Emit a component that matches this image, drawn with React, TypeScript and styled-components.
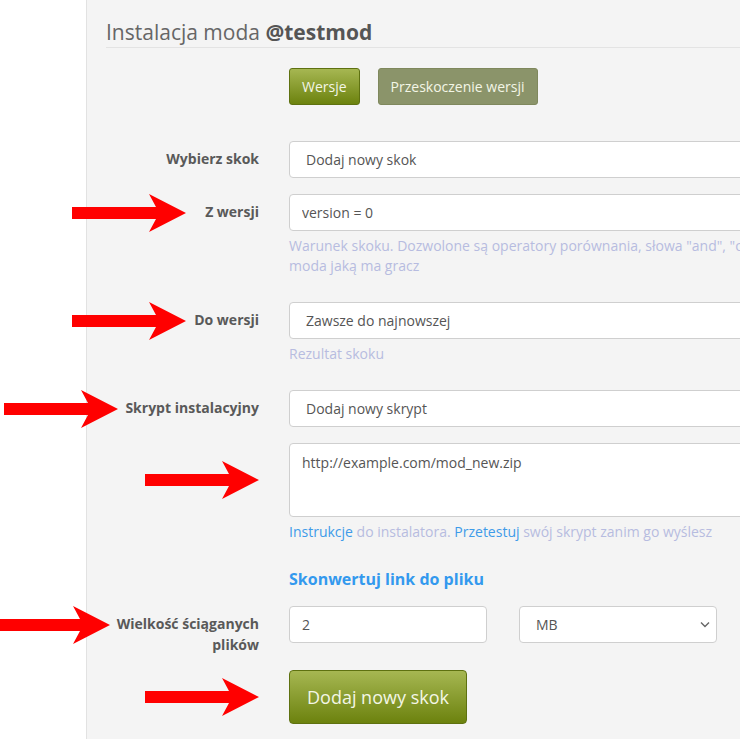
import React from "react";
import styled, { createGlobalStyle } from "styled-components";

const Global = createGlobalStyle`
  html, body { margin: 0; padding: 0; overflow: hidden; background: #fff; }
  body { font-family: "Open Sans", "Liberation Sans", sans-serif; font-size: 14px; color: #555; }
  * { box-sizing: border-box; }
`;

const Page = styled.div`
  position: relative;
  display: flex;
  width: 1200px;
  min-height: 739px;
`;

const Sidebar = styled.div`
  width: 87px;
  flex: none;
  background: #fff;
  border-right: 1px solid #e2e2e2;
`;

const Main = styled.main`
  flex: 1;
  background: #f4f4f4;
  padding: 20px 0 40px 19px;
`;

const Title = styled.h1`
  margin: 0 0 20px;
  padding-bottom: 3px;
  font-size: 21px;
  line-height: 24px;
  font-weight: 400;
  color: #666;
  border-bottom: 1px solid #e3e3e3;
  strong { font-weight: 700; color: #555; }
`;

const Form = styled.div`
  display: grid;
  grid-template-columns: 153px 1fr;
  column-gap: 30px;
  align-items: start;
`;

const Offset = styled.div`
  grid-column: 2;
`;

const Tabs = styled(Offset)`
  display: flex;
  gap: 18px;
  margin-bottom: 36px;
`;

const TabButton = styled.button<{ $active?: boolean }>`
  height: 37px;
  padding: 0 12px;
  border-radius: 3px;
  font-family: inherit;
  font-size: 14px;
  color: #f3f6e6;
  border: 1px solid ${(p) => (p.$active ? "#5e7110" : "#7f885d")};
  background: ${(p) =>
    p.$active ? "linear-gradient(#a6b752, #6c820e)" : "#8b946a"};
`;

const Label = styled.label`
  grid-column: 1;
  text-align: right;
  font-weight: 700;
  font-size: 14px;
  line-height: 21px;
  color: #595959;
  padding-top: 7px;
  margin-bottom: 15px;
`;

const Field = styled.div`
  grid-column: 2;
  margin-bottom: 16px;
`;

const controlBase = `
  display: block;
  width: 100%;
  height: 37px;
  background: #fff;
  border: 1px solid #cfcfcf;
  border-radius: 4px;
  font-family: "Open Sans", "Liberation Sans", sans-serif;
  font-size: 14px;
  color: #555;
  outline: none;
`;

const Input = styled.input`
  ${controlBase}
  padding: 0 12px;
`;

const SelectWrap = styled.div`
  position: relative;
`;

const Select = styled.select`
  ${controlBase}
  appearance: none;
  -webkit-appearance: none;
  padding: 0 28px 0 16px;
`;

const Chevron = styled.svg`
  position: absolute;
  right: 7px;
  top: 15px;
  pointer-events: none;
`;

const TextArea = styled.textarea`
  ${controlBase}
  height: 74px;
  padding: 8px 12px;
  line-height: 21px;
  resize: none;
`;

const Help = styled.p`
  margin: 5px 0 10px;
  font-size: 14px;
  line-height: 20px;
  color: #b7bce0;
  white-space: nowrap;
  a { color: #3e9be9; text-decoration: none; }
`;

const Convert = styled.a`
  display: block;
  font-size: 16px;
  font-weight: 700;
  line-height: 22px;
  color: #3399ee;
  text-decoration: none;
`;

const Pair = styled.div`
  display: grid;
  grid-template-columns: 198px 198px;
  column-gap: 32px;
`;

const Submit = styled.button`
  height: 54px;
  padding: 0 17px;
  border-radius: 4px;
  border: 1px solid #5e7110;
  background: linear-gradient(#a6b752, #6c820e);
  color: #f3f6e6;
  font-family: inherit;
  font-size: 18px;
`;

const ArrowSvg = styled.svg`
  position: absolute;
  pointer-events: none;
`;

const Arrow = ({ x, y }: { x: number; y: number }) => (
  <ArrowSvg width={114} height={38} viewBox="0 0 114 38" style={{ left: x, top: y }}>
    <polygon points="0,13 84,13 77,0 114,19 77,38 84,25 0,25" fill="#ff0000" />
  </ArrowSvg>
);

const ChevronIcon = () => (
  <Chevron width="10" height="7" viewBox="0 0 10 7">
    <polyline points="1,1.5 5,5.5 9,1.5" fill="none" stroke="#666" strokeWidth="1.4" />
  </Chevron>
);

export default function App() {
  return (
    <>
      <Global />
      <Page>
        <Sidebar />
        <Main>
          <Title>
            Instalacja moda <strong>@testmod</strong>
          </Title>
          <Form>
            <Tabs>
              <TabButton $active>Wersje</TabButton>
              <TabButton>Przeskoczenie wersji</TabButton>
            </Tabs>

            <Label>Wybierz skok</Label>
            <Field>
              <SelectWrap>
                <Select defaultValue="new">
                  <option value="new">Dodaj nowy skok</option>
                </Select>
              </SelectWrap>
            </Field>

            <Label>Z wersji</Label>
            <Field>
              <Input defaultValue="version = 0" />
              <Help>
                Warunek skoku. Dozwolone są operatory porównania, słowa "and", "or", "not" oraz zmienna "version" oznaczająca wersję
                <br />
                moda jaką ma gracz
              </Help>
            </Field>

            <Label>Do wersji</Label>
            <Field>
              <SelectWrap>
                <Select defaultValue="latest">
                  <option value="latest">Zawsze do najnowszej</option>
                </Select>
              </SelectWrap>
              <Help>Rezultat skoku</Help>
            </Field>

            <Label>Skrypt instalacyjny</Label>
            <Field>
              <SelectWrap>
                <Select defaultValue="new">
                  <option value="new">Dodaj nowy skrypt</option>
                </Select>
              </SelectWrap>
            </Field>

            <Field>
              <TextArea defaultValue="http://example.com/mod_new.zip" />
              <Help>
                <a href="#">Instrukcje</a> do instalatora. <a href="#">Przetestuj</a> swój skrypt zanim go wyślesz
              </Help>
            </Field>

            <Field>
              <Convert href="#">Skonwertuj link do pliku</Convert>
            </Field>

            <Label>Wielkość ściąganych plików</Label>
            <Field>
              <Pair>
                <Input defaultValue="2" />
                <SelectWrap>
                  <Select defaultValue="MB">
                    <option value="MB">MB</option>
                  </Select>
                  <ChevronIcon />
                </SelectWrap>
              </Pair>
            </Field>

            <Field>
              <Submit>Dodaj nowy skok</Submit>
            </Field>
          </Form>
        </Main>
        <Arrow x={72} y={194} />
        <Arrow x={72} y={302} />
        <Arrow x={4} y={390} />
        <Arrow x={145} y={461} />
        <Arrow x={-4} y={606} />
        <Arrow x={145} y={678} />
      </Page>
    </>
  );
}
